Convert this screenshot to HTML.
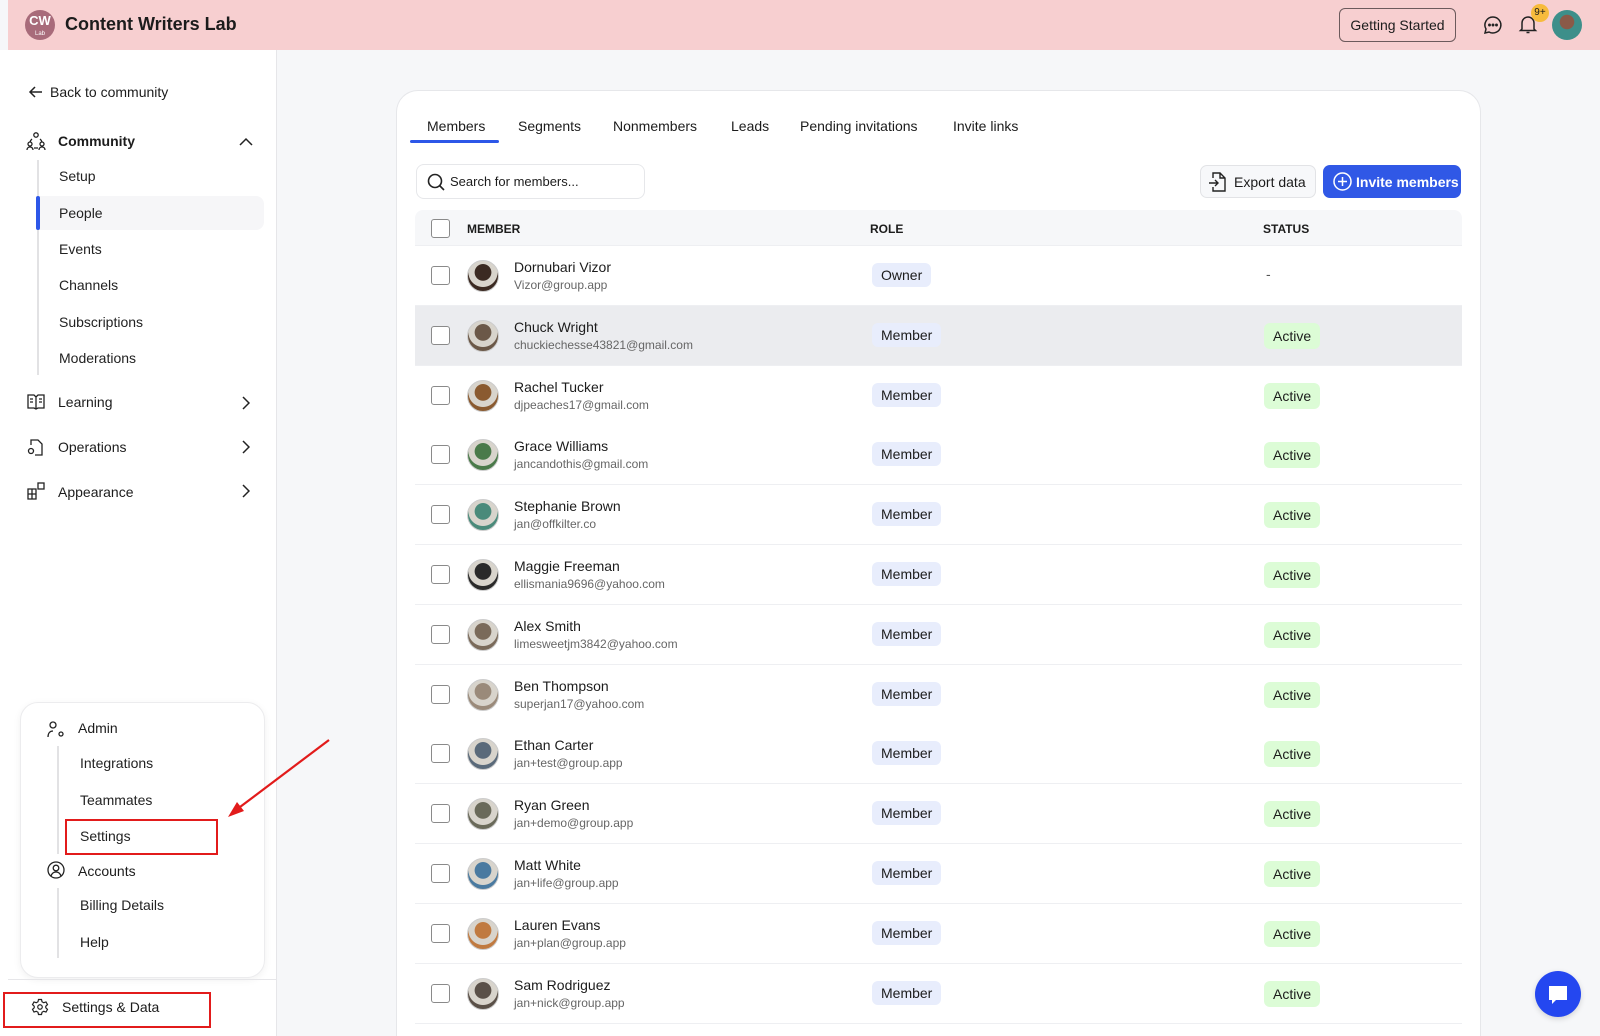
<!DOCTYPE html>
<html><head><meta charset="utf-8"><style>
*{box-sizing:border-box;margin:0;padding:0}
html,body{width:1600px;height:1036px;overflow:hidden}
body{background:#f6f7f9;font-family:"Liberation Sans",sans-serif;color:#1c1c1c}
#w{position:relative;width:1600px;height:1036px;overflow:hidden}
.a{position:absolute}
.hdr{left:8px;top:0;width:1592px;height:50px;background:#f7cfd0}
.side{left:0;top:50px;width:277px;height:986px;background:#fff;border-right:1px solid #e6e6e9}
.t14{font-size:14px;white-space:nowrap}
.sub{font-size:14px;color:#222;white-space:nowrap}
.card{left:396px;top:90px;width:1085px;height:946px;background:#fff;border:1px solid #e6e7ea;border-bottom:0;border-radius:22px 22px 0 0}
.row{left:415px;width:1047px;height:60px;border-bottom:1px solid #eeeff2;background:#fff}
.cb{width:19px;height:19px;border:1.5px solid #8a8a8a;border-radius:3px;background:#fff}
.av{width:32px;height:32px;border-radius:50%;border:1.5px solid #ccc;overflow:hidden}
.pill{height:24px;line-height:24px;padding:0 9px;border-radius:6px;font-size:14px}
</style></head><body><div id="w">
<div class="a hdr"></div>
<div class="a" style="left:25px;top:10px;width:30px;height:30px;border-radius:50%;background:#a86b7a;color:#fff;text-align:center;font-weight:bold;font-size:13px;line-height:22px">CW<div style="font-size:6px;line-height:4px;font-weight:normal">Lab</div></div>
<div class="a" style="left:65px;top:14px;font-size:18px;font-weight:bold">Content Writers Lab</div>
<div class="a" style="left:1339px;top:8px;width:117px;height:34px;border:1px solid #6c5a5c;border-radius:6px;font-size:14px;text-align:center;line-height:32px">Getting Started</div>
<svg class="a" style="left:1482px;top:14px" width="22" height="22" viewBox="0 0 22 22" fill="none" stroke="#222" stroke-width="1.5"><path d="M11 3a8 8 0 1 1-4 15l-4 1 1-4A8 8 0 0 1 11 3z"/><circle cx="7.5" cy="11" r=".7" fill="#222"/><circle cx="11" cy="11" r=".7" fill="#222"/><circle cx="14.5" cy="11" r=".7" fill="#222"/></svg>
<svg class="a" style="left:1517px;top:13px" width="22" height="22" viewBox="0 0 22 22" fill="none" stroke="#222" stroke-width="1.5"><path d="M5 16V10a6 6 0 0 1 12 0v6l1.5 1.5h-15zM9.5 19.5h3"/></svg>
<div class="a" style="left:1531px;top:4px;width:18px;height:18px;border-radius:50%;background:#f7bb3c;font-size:10px;text-align:center;line-height:18px">9+</div>
<div class="a" style="left:1552px;top:10px;width:30px;height:30px;border-radius:50%;background:radial-gradient(circle at 50% 40%,#8a5a48 0 30%,#3d8f8a 32% 100%)"></div>

<div class="a side"></div>
<svg class="a" style="left:28px;top:84px" width="16" height="16" viewBox="0 0 16 16" fill="none" stroke="#222" stroke-width="1.5"><path d="M14 8H2M7 3L2 8l5 5"/></svg>
<div class="a t14" style="left:50px;top:84px">Back to community</div>
<svg class="a" style="left:26px;top:131px" width="20" height="20" viewBox="0 0 20 20" fill="none" stroke="#222" stroke-width="1.3"><circle cx="10" cy="4" r="2.2"/><circle cx="4" cy="13" r="2"/><circle cx="16" cy="13" r="2"/><path d="M1 19c0-2 1.5-3 3-3s3 1 3 3M13 19c0-2 1.5-3 3-3s3 1 3 3M6 8a6 6 0 0 0-2 3M14 8a6 6 0 0 1 2 3M8 17h4"/></svg>
<div class="a t14" style="left:58px;top:133px;font-weight:bold">Community</div>
<svg class="a" style="left:239px;top:137px" width="14" height="10" viewBox="0 0 14 10" fill="none" stroke="#222" stroke-width="1.5"><path d="M1 8l6-6 6 6"/></svg>
<div class="a" style="left:37px;top:160px;width:2px;height:215px;background:#e2e2e4"></div>
<div class="a" style="left:37px;top:196px;width:227px;height:34px;background:#f6f6f8;border-radius:0 8px 8px 0"></div>
<div class="a" style="left:36px;top:196px;width:4px;height:34px;background:#2d57e8;border-radius:2px"></div>
<div class="a sub" style="left:59px;top:168px">Setup</div>
<div class="a sub" style="left:59px;top:205px">People</div>
<div class="a sub" style="left:59px;top:241px">Events</div>
<div class="a sub" style="left:59px;top:277px">Channels</div>
<div class="a sub" style="left:59px;top:314px">Subscriptions</div>
<div class="a sub" style="left:59px;top:350px">Moderations</div>
<svg class="a" style="left:27px;top:394px" width="18" height="16" viewBox="0 0 18 16" fill="none" stroke="#222" stroke-width="1.3"><path d="M1 1h6l2 2 2-2h6v13h-6l-2 1-2-1H1zM9 3v12M3 5h3M3 8h3M12 5h3M12 8h3"/></svg>
<div class="a t14" style="left:58px;top:394px">Learning</div>
<svg class="a" style="left:27px;top:438px" width="18" height="18" viewBox="0 0 18 18" fill="none" stroke="#222" stroke-width="1.3"><path d="M4 7V2h7l4 4v11H8"/><circle cx="4" cy="13" r="2.5"/></svg>
<div class="a t14" style="left:58px;top:439px">Operations</div>
<svg class="a" style="left:27px;top:482px" width="18" height="18" viewBox="0 0 18 18" fill="none" stroke="#222" stroke-width="1.3"><path d="M1 7h8v10H1zM1 12h8M5 7v10"/><rect x="11" y="1" width="6" height="6"/></svg>
<div class="a t14" style="left:58px;top:484px">Appearance</div>
<svg class="a" style="left:241px;top:396px" width="9" height="14" viewBox="0 0 9 14" fill="none" stroke="#222" stroke-width="1.5"><path d="M2 1l6 6-6 6"/></svg>
<svg class="a" style="left:241px;top:440px" width="9" height="14" viewBox="0 0 9 14" fill="none" stroke="#222" stroke-width="1.5"><path d="M2 1l6 6-6 6"/></svg>
<svg class="a" style="left:241px;top:484px" width="9" height="14" viewBox="0 0 9 14" fill="none" stroke="#222" stroke-width="1.5"><path d="M2 1l6 6-6 6"/></svg>

<div class="a" style="left:20px;top:702px;width:245px;height:276px;background:#fff;border:1px solid #ececee;border-radius:18px;box-shadow:0 2px 8px rgba(0,0,0,.06)"></div>
<svg class="a" style="left:47px;top:720px" width="18" height="18" viewBox="0 0 18 18" fill="none" stroke="#222" stroke-width="1.3"><circle cx="6" cy="5" r="3"/><path d="M1 17c0-4 2-6 5-6M12 14a2 2 0 1 0 4 0 2 2 0 1 0-4 0"/></svg>
<div class="a t14" style="left:78px;top:720px">Admin</div>
<div class="a" style="left:57px;top:746px;width:2px;height:108px;background:#e2e2e4"></div>
<div class="a sub" style="left:80px;top:755px">Integrations</div>
<div class="a sub" style="left:80px;top:792px">Teammates</div>
<div class="a sub" style="left:80px;top:828px">Settings</div>
<div class="a" style="left:65px;top:819px;width:153px;height:36px;border:2px solid #e21b1b"></div>
<svg class="a" style="left:47px;top:861px" width="18" height="18" viewBox="0 0 18 18" fill="none" stroke="#222" stroke-width="1.3"><circle cx="9" cy="9" r="8"/><circle cx="9" cy="7" r="2.8"/><path d="M4 15c1-3 3-4 5-4s4 1 5 4"/></svg>
<div class="a t14" style="left:78px;top:863px">Accounts</div>
<div class="a" style="left:57px;top:888px;width:2px;height:70px;background:#e2e2e4"></div>
<div class="a sub" style="left:80px;top:897px">Billing Details</div>
<div class="a sub" style="left:80px;top:934px">Help</div>
<svg class="a" style="left:222px;top:736px" width="112" height="86" viewBox="0 0 112 86"><path d="M107 4L14 74" stroke="#e21b1b" stroke-width="2.2"/><path d="M6 81l16-6-7-9z" fill="#e21b1b"/></svg>
<div class="a" style="left:8px;top:979px;width:268px;height:1px;background:#e6e6e9"></div>
<div class="a" style="left:3px;top:992px;width:208px;height:36px;border:2px solid #e21b1b"></div>
<svg class="a" style="left:31px;top:998px" width="18" height="18" viewBox="0 0 24 24" fill="none" stroke="#222" stroke-width="1.6"><circle cx="12" cy="12" r="3"/><path d="M10 2h4l.7 3 2.3 1.3 3-1 2 3.5-2.3 2.2v2l2.3 2.2-2 3.5-3-1L14.7 19 14 22h-4l-.7-3L7 17.7l-3 1-2-3.5L4.3 13v-2L2 8.8l2-3.5 3 1L9.3 5z"/></svg>
<div class="a t14" style="left:62px;top:999px">Settings &amp; Data</div>

<div class="a card"></div>
<div class="a t14" style="left:427px;top:118px">Members</div>
<div class="a t14" style="left:518px;top:118px">Segments</div>
<div class="a t14" style="left:613px;top:118px">Nonmembers</div>
<div class="a t14" style="left:731px;top:118px">Leads</div>
<div class="a t14" style="left:800px;top:118px">Pending invitations</div>
<div class="a t14" style="left:953px;top:118px">Invite links</div>
<div class="a" style="left:410px;top:140px;width:89px;height:3px;border-radius:2px;background:#2d57e8"></div>
<div class="a" style="left:416px;top:164px;width:229px;height:35px;border:1px solid #e6e7ea;border-radius:8px"></div>
<svg class="a" style="left:427px;top:173px" width="18" height="18" viewBox="0 0 18 18" fill="none" stroke="#222" stroke-width="1.6"><circle cx="8" cy="8" r="6.5"/><path d="M12.5 12.5L17 17"/></svg>
<div class="a" style="left:450px;top:174px;font-size:13px">Search for members...</div>
<div class="a" style="left:1200px;top:165px;width:116px;height:33px;border:1px solid #e2e3e6;border-radius:7px;background:#f7f8fa"></div>
<svg class="a" style="left:1208px;top:172px" width="18" height="20" viewBox="0 0 18 20" fill="none" stroke="#222" stroke-width="1.4"><path d="M5 6V1h7l5 5v13H5v-4M12 1v5h5M1 11h9M7 8l3 3-3 3"/></svg>
<div class="a t14" style="left:1234px;top:174px">Export data</div>
<div class="a" style="left:1323px;top:165px;width:138px;height:33px;border-radius:7px;background:#3058e6"></div>
<svg class="a" style="left:1333px;top:172px" width="19" height="19" viewBox="0 0 19 19" fill="none" stroke="#fff" stroke-width="1.5"><circle cx="9.5" cy="9.5" r="8.5"/><path d="M9.5 5v9M5 9.5h9"/></svg>
<div class="a t14" style="left:1356px;top:174px;color:#fff;font-weight:bold">Invite members</div>

<div class="a" style="left:415px;top:210px;width:1047px;height:36px;background:#f6f7f9;border-radius:8px 8px 0 0;border-bottom:1px solid #eeeff2"></div>
<div class="a cb" style="left:431px;top:219px"></div>
<div class="a" style="left:467px;top:222px;font-size:12px;font-weight:bold">MEMBER</div>
<div class="a" style="left:870px;top:222px;font-size:12px;font-weight:bold">ROLE</div>
<div class="a" style="left:1263px;top:222px;font-size:12px;font-weight:bold">STATUS</div>

<div id="rows"></div>
<script>
var d=[["Dornubari Vizor","Vizor@group.app","Owner","-","#3b2a22"],["Chuck Wright","chuckiechesse43821@gmail.com","Member","Active","#6b5848"],["Rachel Tucker","djpeaches17@gmail.com","Member","Active","#8a5a30"],["Grace Williams","jancandothis@gmail.com","Member","Active","#4a7a4a"],["Stephanie Brown","jan@offkilter.co","Member","Active","#4a8a7a"],["Maggie Freeman","ellismania9696@yahoo.com","Member","Active","#2a2a2a"],["Alex Smith","limesweetjm3842@yahoo.com","Member","Active","#7a6a5a"],["Ben Thompson","superjan17@yahoo.com","Member","Active","#9a8a7a"],["Ethan Carter","jan+test@group.app","Member","Active","#5a6a7a"],["Ryan Green","jan+demo@group.app","Member","Active","#6a6a5a"],["Matt White","jan+life@group.app","Member","Active","#4a7aa0"],["Lauren Evans","jan+plan@group.app","Member","Active","#c07a40"],["Sam Rodriguez","jan+nick@group.app","Member","Active","#5a5048"]];
var h="";
for(var i=0;i<d.length;i++){var y=246+i*59.8;var r=d[i];
h+='<div class="a row" style="top:'+y+'px;'+(i==1?'background:#ebecef':'')+'"></div>';
h+='<div class="a cb" style="left:431px;top:'+(y+20)+'px"></div>';
h+='<div class="a av" style="left:467px;top:'+(y+14)+'px;background:radial-gradient(circle at 50% 38%,'+r[4]+' 0 34%,#d8d4cc 36% 60%,'+r[4]+' 62%)"></div>';
h+='<div class="a t14" style="left:514px;top:'+(y+13)+'px">'+r[0]+'</div>';
h+='<div class="a" style="left:514px;top:'+(y+32)+'px;font-size:12px;color:#666">'+r[1]+'</div>';
h+='<div class="a pill" style="left:872px;top:'+(y+17)+'px;background:#e8edfc">'+r[2]+'</div>';
if(r[3]=="-")h+='<div class="a t14" style="left:1266px;top:'+(y+20)+'px;color:#555">-</div>';
else h+='<div class="a pill" style="left:1264px;top:'+(y+17)+'px;background:#dcfcd6;height:26px;line-height:26px">Active</div>';}
document.getElementById("rows").innerHTML=h;
</script>
<div class="a" style="left:1535px;top:971px;width:46px;height:46px;border-radius:50%;background:#2447f0;box-shadow:0 2px 6px rgba(0,0,0,.15)"></div>
<svg class="a" style="left:1546px;top:983px" width="24" height="24" viewBox="0 0 24 24"><path d="M3 3h18v14H10l-4 4v-4H3z" fill="#fff"/></svg>
</div></body></html>
